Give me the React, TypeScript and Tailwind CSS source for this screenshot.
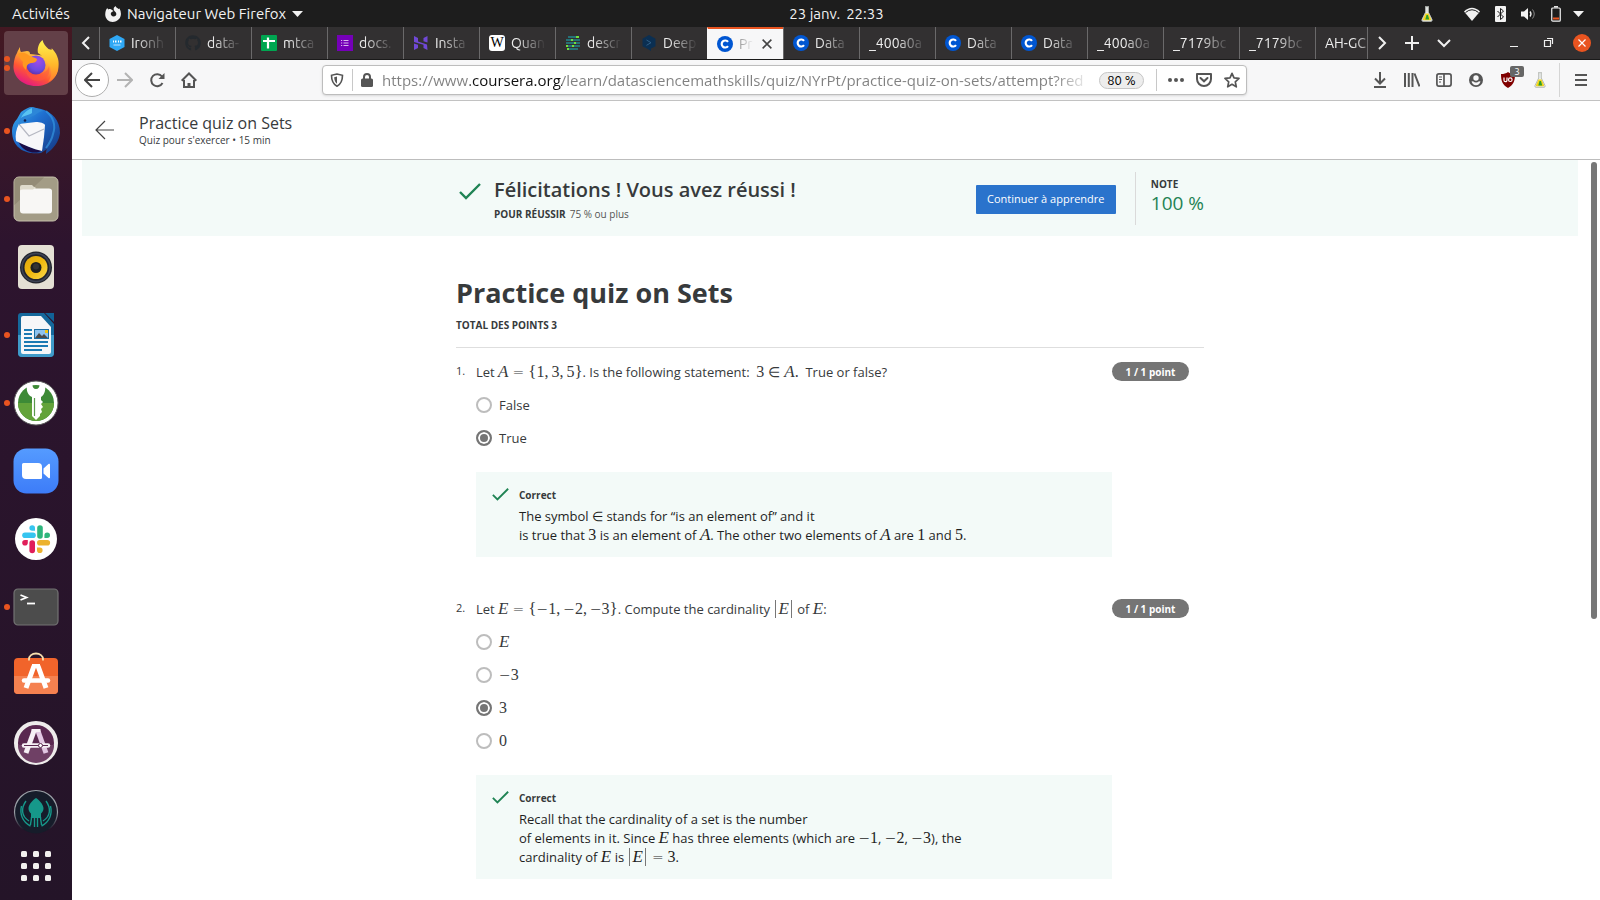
import React, { useState } from "react";
import { FaGithub } from "react-icons/fa";

/* ---------- Math helpers ---------- */

function V({ children }: { children: React.ReactNode }) {
  return <i className="font-['Liberation_Serif',serif] text-[17px] leading-none">{children}</i>;
}

function N({ children }: { children: React.ReactNode }) {
  return <span className="font-['Liberation_Serif',serif] text-[16px] leading-none">{children}</span>;
}

function Rel({ children }: { children: React.ReactNode }) {
  return <span className="mx-1 font-['DejaVu_Sans',sans-serif] text-[14px] leading-none font-extralight">{children}</span>;
}

function Neg({ children }: { children: React.ReactNode }) {
  return (
    <span className="whitespace-nowrap">
      <span className="font-['DejaVu_Sans',sans-serif] text-[14px] leading-none font-extralight">−</span>
      <N>{children}</N>
    </span>
  );
}

function Brace({ children }: { children: React.ReactNode }) {
  return <span className="font-['Liberation_Serif',serif] text-[17px] leading-none">{children}</span>;
}

function Comma() {
  return <span className="mr-[3px] font-['Liberation_Serif',serif] text-[16px] leading-none">,</span>;
}

function Abs({ children }: { children: React.ReactNode }) {
  return <span className="mx-[2px] border-x border-[#777] px-[2px]">{children}</span>;
}

/* ---------- Dock icons ---------- */

function FirefoxIcon() {
  return (
    <svg viewBox="0 0 48 48" className="size-12">
      <defs>
        <linearGradient id="ffBody" x1="0.8" y1="0.1" x2="0.3" y2="1">
          <stop offset="0" stopColor="#fff44f" />
          <stop offset="0.35" stopColor="#ffa436" />
          <stop offset="0.65" stopColor="#ff5634" />
          <stop offset="1" stopColor="#e31587" />
        </linearGradient>
        <radialGradient id="ffGlobe" cx="0.6" cy="0.3" r="0.8">
          <stop offset="0" stopColor="#a04be8" />
          <stop offset="0.6" stopColor="#6b4be0" />
          <stop offset="1" stopColor="#5a2a9e" />
        </radialGradient>
        <linearGradient id="ffTail" x1="0.5" y1="0" x2="0.5" y2="1">
          <stop offset="0" stopColor="#fff44f" />
          <stop offset="0.6" stopColor="#ffb72a" />
          <stop offset="1" stopColor="#ff7a2f" />
        </linearGradient>
      </defs>
      <path d="M5 14c1-3 2-4 3-6 0 2 0 4 1 5l6-1c2 0 3 1 3 3l17 2c6 3 11 5 11 10 0 12-9 20-22 20S1 38 1.500 27C2 21 3 17 5 14z" fill="url(#ffBody)" />
      <path d="M26 14c-1-5 1-10 4.500-13 1 4 3 6 6 9 3 1 4 1 3-1 5 5 8 11 7 19-.5 7-4 12-10.500 15 3-4 4-8 3-13-1-6-4-10-13-16z" fill="url(#ffTail)" />
      <circle cx="24" cy="26" r="9.500" fill="url(#ffGlobe)" />
      <path d="M6 15c3-2 6-1 9 0 3 3 7 3 10 5 0 3-3 4-6 4-4 1-5 4-5 7-3-3-4-5-3-8-2-2-4-5-5-8z" fill="#ff9820" />
      <path d="M14 31c3 5 9 7 14 4 5-1 8-4 9-8 2 8-3 15-11 15-7 0-12-5-12-11z" fill="#ff5a3c" opacity=".55" />
    </svg>
  );
}

function ThunderbirdIcon() {
  return (
    <svg viewBox="0 0 48 48" className="size-12">
      <defs>
        <linearGradient id="tbBody" x1="0" y1="0" x2="1" y2="1">
          <stop offset="0" stopColor="#3bb1ee" />
          <stop offset="0.4" stopColor="#1f6fd0" />
          <stop offset="1" stopColor="#15357f" />
        </linearGradient>
      </defs>
      <path d="M9 5c4-3 8-5 11-5 3 1 6 1 9 2 11 3 19 11 19 24-1 8-5 13-9 17l-5 4c0-2 0-3 1-5l-6 4C15 48 0 42 0 24c0-5 2-9 5-12z" fill="url(#tbBody)" />
      <path d="M6 34c6 4 16 9 25 9-7 5-20 3-25-9z" fill="#1b0d45" />
      <path d="M7 17l17-2c4 0 8 1 9 3l-1 12-2 14C21 42 12 38 4 34 3 28 4 22 7 17z" fill="#f7f7f9" />
      <path d="M7 17l10 12 15-7" fill="none" stroke="#b6b8c2" strokeWidth="1.200" />
      <path d="M20 0c-7 3-12 9-13 18 5-5 11-8 16-10 3-2 5-4 9-4z" fill="#2c86d8" />
      <path d="M20 1c-5 2-9 5-11 10 4-3 8-3 11-5z" fill="#59c3f2" />
      <circle cx="13" cy="13.500" r="1.300" fill="#12204d" />
      <path d="M34 4c7 6 10 14 7 23-1 5-4 10-7 14" fill="none" stroke="#38a0e8" strokeWidth="2" opacity=".6" />
    </svg>
  );
}

function FilesIcon() {
  return (
    <svg viewBox="0 0 48 48" className="size-12">
      <rect x="2" y="2" width="44" height="44" rx="5" fill="#a39c86" stroke="#c5bfab" strokeWidth="1" />
      <path d="M2.500 30V7a4 4 0 0 1 4-4.500H32z" fill="#948c77" />
      <path d="M8 12a2 2 0 0 1 2-2h10l4 4h13a3 3 0 0 1 3 3v4H8z" fill="#dedacb" />
      <rect x="8" y="13.500" width="32" height="25" rx="3" fill="#f8f7f5" />
      <path d="M8 18v-3l3-0.500h10l3-2.500h-14a2 2 0 0 0-2 2z" fill="#dedacb" />
    </svg>
  );
}

function RhythmboxIcon() {
  return (
    <svg viewBox="0 0 48 48" className="size-12">
      <defs>
        <linearGradient id="rbCone" x1="0" y1="0" x2="1" y2="1">
          <stop offset="0" stopColor="#e0a60d" />
          <stop offset="0.5" stopColor="#f0b90f" />
          <stop offset="1" stopColor="#f8d94c" />
        </linearGradient>
      </defs>
      <rect x="6" y="2" width="36" height="44" rx="4" fill="#e4e0d4" />
      <circle cx="24" cy="24.500" r="16" fill="#22242b" />
      <circle cx="24" cy="24.500" r="14" fill="none" stroke="#3d4354" strokeWidth="1.500" />
      <circle cx="24" cy="24.500" r="11.500" fill="url(#rbCone)" />
      <circle cx="24" cy="24.500" r="5.500" fill="#1f2020" />
      <circle cx="24" cy="23.500" r="3" fill="#343434" />
    </svg>
  );
}

function WriterIcon() {
  return (
    <svg viewBox="0 0 48 48" className="size-12">
      <path d="M9 2h23l10 11v29a4 4 0 0 1-4 4H10a4 4 0 0 1-4-4V5a3 3 0 0 1 3-3z" fill="#15699c" />
      <path d="M6 24h36v18a4 4 0 0 1-4 4H10a4 4 0 0 1-4-4z" fill="#3f9bc9" />
      <path d="M33 2h9v9z" fill="#116297" />
      <path d="M11 5h18l10 11v25a2 2 0 0 1-2 2H11a2 2 0 0 1-2-2V7a2 2 0 0 1 2-2z" fill="#f6f7f8" />
      <path d="M12 19h8M12 23h8M12 27h8M12 31h24M12 35h24M12 39h18" stroke="#1b7ab3" strokeWidth="2" />
      <rect x="22.500" y="18.500" width="14" height="9" fill="#8ec3ef" stroke="#1b6ea3" />
      <path d="M23 27l4-5 3 3 2-2 4 4z" fill="#4a4a4a" />
      <rect x="33" y="19" width="3" height="3" fill="#f2c511" />
    </svg>
  );
}

function KeyIcon() {
  return (
    <svg viewBox="0 0 48 48" className="size-12">
      <circle cx="24" cy="24" r="22" fill="#fff" stroke="#5c5c5c" strokeWidth="1" />
      <circle cx="24" cy="24" r="18" fill="#3d8a36" />
      <path d="M6 24a18 18 0 0 0 36 0z" fill="#63a33a" />
      <path d="M15 6h5.500c0 2 1 4 3.500 4s3.500-2 3.500-4H33c1 6-1 10-4 12v3l2 2-2 2 2 3-2 2 1 3-2 2v2l-4 4-4-4V18c-4-2-6-6-5-12z" fill="#fff" />
      <path d="M22.500 19v18" stroke="#5b9a4d" strokeWidth="1.200" />
    </svg>
  );
}

function ZoomIcon() {
  return (
    <svg viewBox="0 0 48 48" className="size-12">
      <defs>
        <linearGradient id="zm" x1="0" y1="0" x2="0" y2="1">
          <stop offset="0" stopColor="#559bff" />
          <stop offset="1" stopColor="#3d7cf8" />
        </linearGradient>
      </defs>
      <rect x="1.500" y="1.500" width="45" height="45" rx="13" fill="url(#zm)" />
      <path d="M10 17.500a1.500 1.500 0 0 1 1.500-1.500H26a4 4 0 0 1 4 4v10.500a1.500 1.500 0 0 1-1.500 1.500H14a4 4 0 0 1-4-4z" fill="#fff" />
      <path d="M31.500 21.500l5-4.500c1-.7 1.500-.3 1.500.8v12.400c0 1.200-.6 1.500-1.500.8l-5-4.500z" fill="#fff" />
    </svg>
  );
}

function SlackIcon() {
  return (
    <svg viewBox="0 0 48 48" className="size-12">
      <circle cx="24" cy="24" r="21" fill="#fff" />
      <g strokeWidth="5.600" strokeLinecap="round">
        <path d="M13 20.200h8" stroke="#36c5f0" />
        <path d="M28 13v8" stroke="#2eb67d" />
        <path d="M27.800 27.800h7.500" stroke="#ecb22e" />
        <path d="M20.200 28v7.500" stroke="#e01e5a" />
      </g>
      <path d="M17.400 13a2.800 2.800 0 0 1 5.600 0v2.800h-2.800a2.800 2.800 0 0 1-2.800-2.800z" fill="#36c5f0" />
      <path d="M35.200 17.400a2.800 2.800 0 0 1 0 5.600h-2.800v-2.800a2.800 2.800 0 0 1 2.800-2.800z" fill="#2eb67d" />
      <path d="M30.600 35.300a2.800 2.800 0 0 1-5.600 0v-2.800h2.800a2.800 2.800 0 0 1 2.800 2.800z" fill="#ecb22e" />
      <path d="M13 30.600a2.800 2.800 0 0 1 0-5.600h2.800v2.800a2.800 2.800 0 0 1-2.800 2.800z" fill="#e01e5a" />
    </svg>
  );
}

function TerminalIcon() {
  return (
    <svg viewBox="0 0 48 48" className="size-12">
      <rect x="2" y="6" width="44" height="36" rx="4" fill="#4c4c4c" stroke="#737373" strokeWidth="1.200" />
      <path d="M8.500 12l6 2.500-6 2.500" fill="none" stroke="#fff" strokeWidth="1.800" />
      <path d="M15 20.500h8" stroke="#fff" strokeWidth="1.800" />
    </svg>
  );
}

function StoreIcon() {
  return (
    <svg viewBox="0 0 48 48" className="size-12">
      <rect x="2" y="7" width="44" height="36" rx="4" fill="#f1642b" />
      <path d="M2 25h44v14a4 4 0 0 1-4 4H6a4 4 0 0 1-4-4z" fill="#f58150" />
      <path d="M17 9.500V8c0-3 3-5.500 7-5.500S31 5 31 8v1.500" fill="none" stroke="#f8dfae" strokeWidth="1.800" />
      <path d="M22 15L14 37M26 15l8 22" stroke="#fff" strokeWidth="5" />
      <path d="M20 13h8v3h-8z" fill="#fff" />
      <path d="M12 29.500h24" stroke="#fff" strokeWidth="4.500" strokeLinecap="round" />
    </svg>
  );
}

function UpdaterIcon() {
  return (
    <svg viewBox="0 0 48 48" className="size-12">
      <circle cx="24" cy="24" r="20" fill="#5a2850" stroke="#eeeceb" strokeWidth="4" />
      <path d="M6 26a18 18 0 0 0 36 0z" fill="#6f4065" />
      <path d="M22 12l-8 22" stroke="#f6f0f5" strokeWidth="5" />
      <path d="M26 12l8 22" stroke="#e3c8e3" strokeWidth="5" />
      <path d="M19.500 10h9v3h-9z" fill="#f6f0f5" />
      <path d="M12 26.500h24" stroke="#f6f0f5" strokeWidth="4.500" strokeLinecap="round" />
      <path d="M12 26.500h24" stroke="#5a2850" strokeWidth="1" />
      <circle cx="28.500" cy="26.500" r="2" fill="#fff" stroke="#5a2850" />
    </svg>
  );
}

function KrakenIcon() {
  return (
    <svg viewBox="0 0 48 48" className="size-12">
      <defs>
        <linearGradient id="kr" x1="0" y1="0" x2="0" y2="1">
          <stop offset="0.500" stopColor="#9aa0a6" />
          <stop offset="0.900" stopColor="#9aa0a6" stopOpacity="0" />
        </linearGradient>
      </defs>
      <circle cx="24" cy="25" r="21.500" fill="#161c2a" stroke="url(#kr)" strokeWidth="1.200" />
      <path d="M24 11c3 2 7 6 7.500 10 0 3-1 4-2.500 5.500V31h-10v-4.500c-1.500-1.500-2.500-2.500-2.500-5.500C17 17 21 13 24 11z" fill="#16988a" />
      <path d="M22.500 30v10M25.500 30v10M19.500 30c0 4-1 5-1 8M28.500 30c0 4 1 5 1 8" stroke="#16988a" strokeWidth="1.400" fill="none" />
      <path d="M14 14c-5 7-5 15 3 20M34 14c5 7 5 15-3 20M9.500 19c-2 8 1 16 9 20M38.500 19c2 8-1 16-9 20" stroke="#16988a" strokeWidth="1.400" fill="none" />
    </svg>
  );
}

const dock = [
  { name: "Firefox", icon: <FirefoxIcon />, dots: 2, active: true },
  { name: "Thunderbird", icon: <ThunderbirdIcon />, dots: 1 },
  { name: "Fichiers", icon: <FilesIcon />, dots: 1 },
  { name: "Rhythmbox", icon: <RhythmboxIcon />, dots: 0 },
  { name: "LibreOffice Writer", icon: <WriterIcon />, dots: 1 },
  { name: "KeePassXC", icon: <KeyIcon />, dots: 1 },
  { name: "Zoom", icon: <ZoomIcon />, dots: 0 },
  { name: "Slack", icon: <SlackIcon />, dots: 0 },
  { name: "Terminal", icon: <TerminalIcon />, dots: 1 },
  { name: "Logiciels", icon: <StoreIcon />, dots: 0 },
  { name: "Mises à jour", icon: <UpdaterIcon />, dots: 0 },
  { name: "GitKraken", icon: <KrakenIcon />, dots: 0 },
];

function Dock() {
  return (
    <nav aria-label="Dock" className="flex w-[72px] shrink-0 flex-col gap-1 overflow-hidden bg-linear-to-b from-[#431822] via-[#2d142e] via-25% to-[#241428] px-1 pt-1">
      {dock.map((d) => (
        <button
          key={d.name}
          aria-label={d.name}
          className={`relative flex h-16 w-16 shrink-0 items-center justify-center rounded ${d.active ? "bg-[#634048]" : ""}`}
        >
          {d.icon}
          <span className="absolute inset-y-0 left-0 flex flex-col justify-center gap-[3px]">
            {Array.from({ length: d.dots }, (_, i) => (
              <span key={i} className="size-[6px] rounded-full bg-[#e95420]" />
            ))}
          </span>
        </button>
      ))}
      <button aria-label="Afficher les applications" className="flex h-[38px] w-16 shrink-0 items-center justify-center">
        <svg viewBox="0 0 30 30" className="size-[30px]" fill="#f2f0ee">
          {[0, 12, 24].map((y) => [0, 12, 24].map((x) => <rect key={`${x}-${y}`} x={x} y={y} width="6" height="6" rx="1.500" />))}
        </svg>
      </button>
    </nav>
  );
}

/* ---------- Desktop top bar ---------- */

function Flask() {
  return (
    <svg viewBox="0 0 16 16" className="size-4">
      <path d="M6 .7h4M6.700 1v5L3 13.500q-.6 1.800 1 1.800h8q1.600 0 1-1.800L9.300 6V1" fill="#e9ecea" stroke="#b9bdb8" strokeWidth="1" />
      <path d="M6.500 7.500h3l2.600 5.800q0 .9-.8.900H4.700q-.8 0-.8-.9z" fill="#f2d51e" />
      <path d="M7.500 9h1.500l1.200 4.500H6.300z" fill="#2f9e2b" />
    </svg>
  );
}

function TopBar() {
  return (
    <header className="grid h-[27px] shrink-0 grid-cols-[1fr_auto_1fr] items-center bg-[#1d1d1d] font-['Ubuntu','Noto_Sans',sans-serif] text-[15px] leading-5 text-[#f2f2f2]">
      <div className="flex items-center pl-3">
        <button className="w-[93px] text-left">Activités</button>
        <button className="flex items-center gap-[6px]">
          <svg viewBox="0 0 16 16" className="size-4" fill="#f2f2f2">
            <path d="M1 4l1.200-2 1 1.500C4.500 2.800 6 2.800 7 4l1.500 1-2 1.300C5 7.500 6 10.500 8.500 10.500c3 0 3.500-3 2-4.500C9.500 5 8 4 9 1.500L10.500 0c.5 1.500 2 2 3 3l1-.5C16.500 6 16.500 10 14 13c-3 3.500-8.500 4-11.500 1C-.5 11 0 7 1 4z" />
          </svg>
          <span>Navigateur Web Firefox</span>
          <svg viewBox="0 0 11 6" className="w-[11px]" fill="#f2f2f2"><path d="M0 0h11L5.500 6z" /></svg>
        </button>
      </div>
      <time className="flex gap-[6px] pl-[73px]"><span>23 janv.</span><span>22:33</span></time>
      <div className="flex items-center justify-end pr-4">
        <Flask />
        <svg viewBox="0 0 16 14" className="ml-[29px] h-[14px] w-4" fill="#f2f2f2">
          <path d="M8 14L0 4.500Q8-3 16 4.500z" />
          <path d="M1.500 5.500Q8 0 14.500 5.500" fill="none" stroke="#1d1d1d" strokeWidth="1" />
        </svg>
        <svg viewBox="0 0 11 16" className="ml-[15px] h-4 w-[11px]">
          <rect width="11" height="16" rx="1" fill="#f2f2f2" />
          <path d="M2.500 5l6 6-3 2.500V2.500l3 2.500-6 6" fill="none" stroke="#1d1d1d" />
        </svg>
        <svg viewBox="0 0 16 14" className="ml-[15px] h-[14px] w-4">
          <path d="M0 4.500h3L7 1v12L3 9.500H0z" fill="#f2f2f2" />
          <path d="M9 4.500q2 2.500 0 5" fill="none" stroke="#f2f2f2" strokeWidth="1.300" />
          <path d="M11.500 2.500q3.500 4.500 0 9" fill="none" stroke="#888" />
        </svg>
        <svg viewBox="0 0 10 16" className="ml-[14px] h-4 w-[10px]">
          <rect x=".75" y="2" width="8.500" height="13.200" rx="1" fill="none" stroke="#f2f2f2" strokeWidth="1.200" />
          <path d="M3 .8h4" stroke="#f2f2f2" strokeWidth="1.500" />
          <rect x="2" y="11.500" width="6" height="2" fill="#e95420" />
        </svg>
        <svg viewBox="0 0 11 6" className="ml-3 w-[11px]" fill="#f2f2f2"><path d="M0 0h11L5.500 6z" /></svg>
      </div>
    </header>
  );
}

/* ---------- Browser tabs ---------- */

const CourseraIcon = () => (
  <svg viewBox="0 0 16 16" className="size-4 shrink-0">
    <circle cx="8" cy="8" r="8" fill="#0056d2" />
    <path d="M11 5.900a3.500 3.500 0 1 0 0 4.200" fill="none" stroke="#fff" strokeWidth="2.200" />
  </svg>
);

const IronIcon = () => (
  <svg viewBox="0 0 16 16" className="size-4 shrink-0">
    <path d="M8 0l7.500 4v8L8 16 .5 12V4z" fill="#2fa8f5" />
    <path d="M4 6.500h1M6 6.500h1.500M9 6.500h1M11 6.500h1.500" stroke="#fff" strokeWidth="2.200" />
    <path d="M4.500 10h7" stroke="#9fd6fb" strokeWidth="1.300" />
  </svg>
);

const SheetIcon = () => (
  <svg viewBox="0 0 16 16" className="size-4 shrink-0">
    <rect width="16" height="16" rx="1" fill="#00a651" />
    <path d="M2 6h12M7 2.500v11" stroke="#fff" strokeWidth="2.200" />
  </svg>
);

const FormIcon = () => (
  <svg viewBox="0 0 16 16" className="size-4 shrink-0">
    <rect width="16" height="16" fill="#7500b8" />
    <path d="M6.500 5.500h5M6.500 8h5M6.500 10.500h5M4 5.500h1.200M4 8h1.200M4 10.500h1.200" stroke="#d9b6ec" />
  </svg>
);

const HIcon = () => (
  <svg viewBox="0 0 16 16" className="size-4 shrink-0">
    <path d="M1 1l4 2v3.500l9 3L14.500 15l-4-2V9.800L1 7z" fill="#7048d6" />
    <path d="M10.500 3L14.500 1v6.500l-4-1.300zM1 8.500l4 1.300V13l-4 2z" fill="#7048d6" />
  </svg>
);

const WikiIcon = () => (
  <span className="flex size-4 shrink-0 items-center justify-center rounded-[3px] bg-white font-['Liberation_Serif',serif] text-[14px] leading-none text-black">W</span>
);

const LinesIcon = () => (
  <svg viewBox="0 0 16 16" className="size-4 shrink-0">
    <path d="M3 2h10M1 5h14M1 8h14M1 11h14M3 14h10" stroke="#23868f" strokeWidth="1.600" />
    <path d="M11 2h3M6 5h2M9 8h2M1 11h2M7 11h2M2 14h2" stroke="#6fe03c" strokeWidth="1.800" />
  </svg>
);

const DeepLIcon = () => (
  <svg viewBox="0 0 16 16" className="size-4 shrink-0">
    <path d="M8 0l6.500 3.700v7.500L10 13.500V16l-4-2.500-4.500-2.300V3.700z" fill="#0b2f52" />
    <path d="M5.500 5l4.500 2.700-4.500 2.600" fill="none" stroke="#2f5f87" />
  </svg>
);

const tabs: { title: string; icon?: React.ReactNode; active?: boolean }[] = [
  { title: "Ironh", icon: <IronIcon /> },
  { title: "data-", icon: <FaGithub className="size-4 shrink-0 text-[#24292e]" /> },
  { title: "mtca", icon: <SheetIcon /> },
  { title: "docs.", icon: <FormIcon /> },
  { title: "Insta", icon: <HIcon /> },
  { title: "Quan", icon: <WikiIcon /> },
  { title: "descr", icon: <LinesIcon /> },
  { title: "Deep", icon: <DeepLIcon /> },
  { title: "Pr", icon: <CourseraIcon />, active: true },
  { title: "Data", icon: <CourseraIcon /> },
  { title: "_400a0a" },
  { title: "Data", icon: <CourseraIcon /> },
  { title: "Data", icon: <CourseraIcon /> },
  { title: "_400a0a" },
  { title: "_7179bc" },
  { title: "_7179bc" },
  { title: "AH-GC" },
];

function Stroke({ d, className, w = 2 }: { d: string; className: string; w?: number }) {
  return (
    <svg viewBox="0 0 16 16" className={className} fill="none" stroke="currentColor" strokeWidth={w}>
      <path d={d} />
    </svg>
  );
}

function TabStrip() {
  return (
    <div className="flex h-[33px] shrink-0 border-b border-[#1a1a1a] bg-[#323031] font-['Ubuntu','Noto_Sans',sans-serif] text-[14px] text-[#f0f0f0]">
      <button aria-label="Onglets précédents" className="flex w-[27px] shrink-0 items-center justify-center">
        <Stroke d="M11 2L5 8l6 6" className="size-4" />
      </button>
      <div role="tablist" className="flex min-w-0 flex-1 overflow-hidden border-r border-[#6a696a]">
        {tabs.map((t, i) => (
          <div
            key={i}
            role="tab"
            aria-selected={!!t.active}
            className={`flex w-[76px] shrink-0 items-center gap-[6px] border-l px-[9px] ${
              t.active ? "border-t-2 border-t-[#e95420] border-l-[#f7f7f8] bg-[#f7f7f8] text-[#333]" : "border-[#6a696a]"
            }`}
          >
            {t.icon}
            <span
              className={`min-w-0 flex-1 whitespace-nowrap ${
                t.active
                  ? "[mask-image:linear-gradient(to_right,rgb(0_0_0/0.5),transparent)]"
                  : "[mask-image:linear-gradient(to_right,black_calc(100%-30px),transparent)]"
              }`}
            >
              {t.title}
            </span>
            {t.active && (
              <button aria-label="Fermer l'onglet" className="shrink-0">
                <Stroke d="M3 3l10 10M13 3L3 13" className="size-[14px] text-[#444]" w={1.8} />
              </button>
            )}
          </div>
        ))}
      </div>
      <div className="flex w-[232px] shrink-0 items-center">
        <button aria-label="Onglets suivants" className="ml-[6px]"><Stroke d="M5 2l6 6-6 6" className="size-4" /></button>
        <button aria-label="Nouvel onglet" className="ml-[14px]"><Stroke d="M8 1v14M1 8h14" className="size-4" /></button>
        <button aria-label="Liste des onglets" className="ml-4"><Stroke d="M2 5l6 6 6-6" className="size-4" /></button>
        <button aria-label="Réduire" className="ml-[54px]"><Stroke d="M4 11.500h8" className="size-4" w={1} /></button>
        <button aria-label="Restaurer" className="ml-[18px]"><Stroke d="M4.500 5.500h6v6h-6zM7 3.500h5.500V9" className="size-4" w={1.2} /></button>
        <button aria-label="Fermer" className="ml-[17px] flex size-[18px] items-center justify-center rounded-full bg-[#e95420]">
          <Stroke d="M4 4l8 8M12 4l-8 8" className="size-[14px] text-white" w={1.4} />
        </button>
      </div>
    </div>
  );
}

/* ---------- Browser toolbar ---------- */

function Toolbar() {
  const [url, setUrl] = useState(
    "https://www.coursera.org/learn/datasciencemathskills/quiz/NYrPt/practice-quiz-on-sets/attempt?red"
  );
  return (
    <div className="flex h-[41px] shrink-0 items-center border-b border-[#c2c2c2] bg-[#f7f7f8] font-['Ubuntu','Noto_Sans',sans-serif] text-[#555]">
      <button aria-label="Précédent" className="ml-[3px] flex size-[34px] items-center justify-center rounded-full border border-[#aeaeae] bg-white">
        <Stroke d="M16 8H1M8 1L1 8l7 7" className="size-4 text-[#444]" />
      </button>
      <button aria-label="Suivant" className="ml-2"><Stroke d="M0 8h15M8 1l7 7-7 7" className="size-4 text-[#b3b3b3]" /></button>
      <button aria-label="Actualiser" className="ml-4">
        <svg viewBox="0 0 16 16" className="size-4" fill="none" stroke="currentColor" strokeWidth="2">
          <path d="M13.500 11a6 6 0 1 1-.5-6.500L14 6" /><path d="M15.500 1v6h-6z" fill="currentColor" stroke="none" />
        </svg>
      </button>
      <button aria-label="Accueil" className="ml-4">
        <svg viewBox="0 0 16 16" className="size-4" fill="none" stroke="currentColor" strokeWidth="2">
          <path d="M.7 8.700L8 1.500l7.300 7.200M3 8v7h10V8" /><path d="M8 15v-4" strokeWidth="3" />
        </svg>
      </button>
      <div className="ml-[125px] flex h-[30px] min-w-0 max-w-[925px] flex-1 items-center rounded border border-[#bdbdbd] bg-white pr-[6px] pl-[7px] shadow-sm">
        <svg viewBox="0 0 14 14" className="size-[14px] shrink-0" fill="none" stroke="currentColor" strokeWidth="1.600">
          <path d="M7 1L1.500 2.300c0 5 .8 8.500 5.500 10.900 4.700-2.400 5.500-5.900 5.500-10.900z" />
          <path d="M7 3.500v7.200C5 9.300 4.300 7 4.200 4.200z" fill="currentColor" stroke="none" />
        </svg>
        <span className="mx-2 h-[22px] w-px shrink-0 bg-[#c8c8c8]" />
        <svg viewBox="0 0 12 14" className="h-[14px] w-3 shrink-0" fill="currentColor">
          <rect y="5.500" width="12" height="8.500" rx="1.500" />
          <path d="M3 6V4a3 3 0 0 1 6 0v2" fill="none" stroke="currentColor" strokeWidth="2" />
        </svg>
        <input
          aria-label="Adresse"
          value={url}
          onChange={(e) => setUrl(e.target.value)}
          className="ml-[9px] min-w-0 flex-1 bg-[linear-gradient(to_right,#808080_88px,#111_88px,#111_180px,#808080_180px,#808080_calc(100%-36px),transparent)] bg-clip-text font-['Open_Sans',sans-serif] text-[15px] text-transparent outline-none"
        />
        <span className="ml-2 flex h-[17px] w-[45px] shrink-0 items-center justify-center rounded-full border border-[#c6c6c6] bg-[#ededed] text-[13px] leading-none text-black">80 %</span>
        <span className="mr-[11px] ml-3 h-[22px] w-px shrink-0 bg-[#c8c8c8]" />
        <button aria-label="Actions" className="shrink-0">
          <svg viewBox="0 0 16 16" className="size-4" fill="currentColor"><circle cx="2" cy="8" r="2" /><circle cx="8" cy="8" r="2" /><circle cx="14" cy="8" r="2" /></svg>
        </button>
        <button aria-label="Pocket" className="ml-3 shrink-0">
          <svg viewBox="0 0 16 16" className="size-4" fill="none" stroke="currentColor" strokeWidth="2">
            <path d="M1 2h14v5a7 7 0 0 1-14 0z" strokeLinejoin="round" /><path d="M4.500 6L8 9.300 11.500 6" strokeLinecap="round" />
          </svg>
        </button>
        <button aria-label="Marque-page" className="ml-3 shrink-0">
          <svg viewBox="0 0 16 16" className="size-4" fill="none" stroke="currentColor" strokeWidth="1.700">
            <path d="M8 1.300l2 4.600 5 .5-3.700 3.400 1 5L8 12.300l-4.300 2.500 1-5L1 6.400l5-.5z" strokeLinejoin="round" />
          </svg>
        </button>
      </div>
      <div className="ml-auto flex items-center">
        <button aria-label="Téléchargements"><Stroke d="M8 0v11M3 6.500l5 5 5-5M2 15h12" className="size-4" /></button>
        <button aria-label="Bibliothèque" className="ml-4"><Stroke d="M1 1v14M4.800 1v14M8.500 1v14M10.500 1.500l5 13" className="size-4" /></button>
        <button aria-label="Panneau latéral" className="ml-4">
          <svg viewBox="0 0 16 16" className="size-4" fill="none" stroke="currentColor" strokeWidth="1.700">
            <rect x=".9" y="1.900" width="14.200" height="12.200" rx="2" /><path d="M8 2v12" /><path d="M3 5h3M3 7.500h3M3 10h2" strokeWidth="1" />
          </svg>
        </button>
        <button aria-label="Compte" className="ml-4">
          <svg viewBox="0 0 16 16" className="size-4">
            <circle cx="8" cy="8" r="7" fill="currentColor" /><circle cx="8" cy="6" r="2.700" fill="#f7f7f8" />
            <path d="M3.500 9.500q1 3.700 4.500 3.700t4.500-3.700l-1.500-.3Q8 12 5 9.200z" fill="#f7f7f8" />
          </svg>
        </button>
        <button aria-label="uBlock" className="relative ml-4">
          <svg viewBox="0 0 16 16" className="size-4">
            <path d="M8 0c2 1.500 4 2 7 2 0 7-1.500 11-7 14C2.500 13 1 9 1 2c3 0 5-.5 7-2z" fill="#800000" />
            <path d="M4 5.500v2.700a1.500 1.500 0 0 0 3 0V5.500" fill="none" stroke="#fff" strokeWidth="1.200" /><circle cx="10.300" cy="7.700" r="1.800" fill="none" stroke="#fff" strokeWidth="1.200" />
          </svg>
          <span className="absolute -top-[6px] left-[10px] flex h-[11px] w-[14px] items-center justify-center rounded-[2px] bg-[#666] text-[10px] leading-none text-white">3</span>
        </button>
        <button aria-label="Extension" className="ml-4"><Flask /></button>
        <span className="ml-[11px] h-[34px] w-px bg-[#d5d5d5]" />
        <button aria-label="Menu" className="mr-[11px] ml-[13px]"><Stroke d="M2 3h12M2 8h12M2 13h12" className="size-4" /></button>
      </div>
    </div>
  );
}

/* ---------- Quiz page ---------- */

function Check({ className }: { className: string }) {
  return (
    <svg viewBox="0 0 22 17" className={className} fill="none" stroke="#1f8354" strokeWidth="2.400">
      <path d="M1 9l6 6L21 1" />
    </svg>
  );
}

interface QuestionProps {
  n: number;
  prompt: React.ReactNode;
  options: React.ReactNode[];
  selected: number;
  children: React.ReactNode;
}

function Question({ n, prompt, options, selected, children }: QuestionProps) {
  const [value, setValue] = useState(selected);
  return (
    <section className="flex pt-[14px]">
      <span className="w-5 shrink-0 text-[11px] leading-[18px]">{n}.</span>
      <div className="min-w-0 flex-1">
        <div className="flex items-start justify-between pr-[15px]">
          <p className="text-[13px] leading-5 whitespace-pre">{prompt}</p>
          <span className="flex h-[19px] w-[77px] items-center justify-center rounded-full bg-[#757575] pt-px text-[10px] font-bold text-white">1 / 1 point</span>
        </div>
        <fieldset className="mt-[6px]">
          {options.map((o, i) => (
            <label key={i} className="flex h-[33px] items-center gap-[7px] text-[13px] leading-5">
              <input
                type="radio"
                name={`q${n}`}
                checked={value === i}
                onChange={() => setValue(i)}
                className="size-4 appearance-none rounded-full border-2 border-[#bdbdbd] bg-white checked:border-[#757575] checked:bg-[#757575] checked:shadow-[inset_0_0_0_2px_white]"
              />
              <span>{o}</span>
            </label>
          ))}
        </fieldset>
        <div className="mt-[18px] mr-[92px] flex bg-[#f3faf8] pt-[14px] pr-4 pb-3 pl-4">
          <Check className="mt-[2px] h-[13px] w-[17px]" />
          <div className="ml-[10px] text-[13px] leading-[19px] text-[#1f1f1f]">
            <h3 className="pb-[3px] text-[10px] leading-[18px] font-bold text-[#373a3c]">Correct</h3>
            {children}
          </div>
        </div>
      </div>
    </section>
  );
}

function QuizPage() {
  return (
    <>
      <header className="flex h-[59px] shrink-0 items-center border-b border-[#bdbdbd] bg-white">
        <a href="#back" aria-label="Retour" className="ml-[23px]">
          <svg viewBox="0 0 20 20" className="size-5" fill="none" stroke="#444" strokeWidth="1.200"><path d="M19 10H1M10 1l-9 9 9 9" /></svg>
        </a>
        <div className="ml-6">
          <div className="text-[16px] leading-[20px]">Practice quiz on Sets</div>
          <div className="text-[10px] leading-[14px]">Quiz pour s'exercer • 15 min</div>
        </div>
      </header>
      <div className="flex min-h-0 flex-1">
        <main className="min-w-0 flex-1 overflow-hidden px-[10px]">
          <div className="bg-[#f3faf8]">
            <div className="mx-auto flex h-[76px] max-w-[748px] items-center">
              <Check className="mt-[23px] ml-[3px] h-[17px] w-[22px] self-start" />
              <div className="ml-[13px] pt-[2px]">
                <h2 className="text-[20px] leading-[28px] font-semibold">Félicitations ! Vous avez réussi !</h2>
                <p className="mt-[2px] flex gap-1 text-[10px] leading-[16px]"><b>POUR RÉUSSIR</b><span className="text-[#555]">75 % ou plus</span></p>
              </div>
              <button className="mt-[2px] ml-auto h-[29px] w-[140px] rounded-[1px] bg-[#2a73cc] text-[11px] font-medium text-white">Continuer à apprendre</button>
              <div className="ml-[19px] border-l border-[#dadada] pt-[5px] pb-[11px] pl-[15px]">
                <div className="text-[10px] leading-[15px] font-bold">NOTE</div>
                <div className="text-[19px] leading-[22px] text-[#1f8354]">100 %</div>
              </div>
            </div>
          </div>
          <div className="mx-auto max-w-[748px]">
            <h1 className="pt-[38px] text-[27px] leading-[38px] font-bold">Practice quiz on Sets</h1>
            <div className="mt-[6px] border-b border-[#dedede] pb-[14px] text-[10px] leading-[15px] font-bold">TOTAL DES POINTS 3</div>
            <Question
              n={1}
              selected={1}
              options={["False", "True"]}
              prompt={<>Let <V>A</V><Rel>=</Rel><Brace>{"{"}</Brace><N>1</N><Comma /><N>3</N><Comma /><N>5</N><Brace>{"}"}</Brace>. Is the following statement:  <N>3</N><Rel>∈</Rel><V>A</V><N>.</N>  True or false?</>}
            >
              <p>The symbol <span className="font-['DejaVu_Sans',sans-serif] font-extralight">∈</span> stands for “is an element of” and it<br />
                is true that <N>3</N> is an element of <V>A</V>. The other two elements of <V>A</V> are <N>1</N> and <N>5</N>.</p>
            </Question>
            <div className="h-[28px]" />
            <Question
              n={2}
              selected={2}
              options={[<V>E</V>, <Neg>3</Neg>, <N>3</N>, <N>0</N>]}
              prompt={<>Let <V>E</V><Rel>=</Rel><Brace>{"{"}</Brace><Neg>1</Neg><Comma /><Neg>2</Neg><Comma /><Neg>3</Neg><Brace>{"}"}</Brace>. Compute the cardinality <Abs><V>E</V></Abs> of <V>E</V>:</>}
            >
              <p>Recall that the cardinality of a set is the number<br />
                of elements in it. Since <V>E</V> has three elements (which are <Neg>1</Neg>, <Neg>2</Neg>, <Neg>3</Neg>), the<br />
                cardinality of <V>E</V> is <Abs><V>E</V></Abs><Rel>=</Rel><N>3</N>.</p>
            </Question>
          </div>
        </main>
        <div className="flex w-3 shrink-0 justify-center pt-[2px]">
          <div className="h-[457px] w-[6px] rounded-full bg-[#777]" />
        </div>
      </div>
    </>
  );
}

export default function App() {
  return (
    <div className="flex h-screen flex-col overflow-hidden bg-white font-['Open_Sans',sans-serif] text-[#373a3c]">
      <TopBar />
      <div className="flex min-h-0 flex-1">
        <Dock />
        <div className="flex min-w-0 flex-1 flex-col">
          <TabStrip />
          <Toolbar />
          <QuizPage />
        </div>
      </div>
    </div>
  );
}
